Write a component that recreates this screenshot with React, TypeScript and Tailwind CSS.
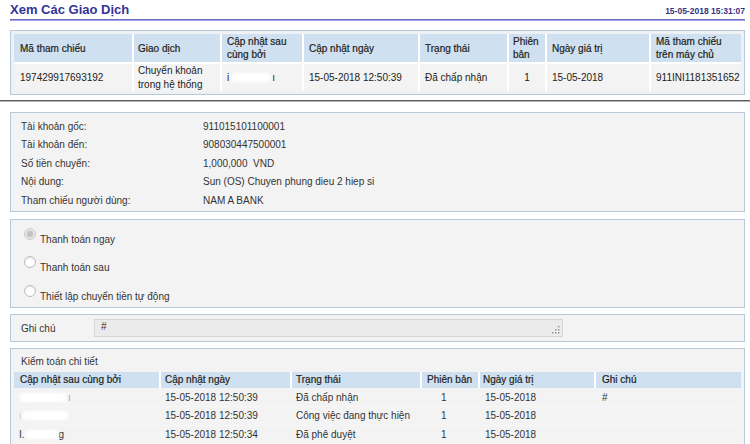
import React from 'react';

const topHead = [
  { label: 'Mã tham chiếu', cls: 'pl-[6px]' },
  { label: 'Giao dịch', cls: 'pl-[4px]' },
  { label: 'Cập nhật sau cùng bởi', cls: 'pl-[5px]' },
  { label: 'Cập nhật ngày', cls: 'pl-[5px]' },
  { label: 'Trạng thái', cls: 'pl-[5px]' },
  { label: 'Phiên bản', cls: 'pl-[4px]' },
  { label: 'Ngày giá trị', cls: 'pl-[5px]' },
  { label: 'Mã tham chiếu trên máy chủ', cls: 'pl-[5px]' },
];

const details = [
  ['Tài khoản gốc:', '911015101100001'],
  ['Tài khoản đến:', '908030447500001'],
  ['Số tiền chuyển:', '1,000,000  VND'],
  ['Nội dung:', 'Sun (OS) Chuyen phung dieu 2 hiep si'],
  ['Tham chiếu người dùng:', 'NAM A BANK'],
];

const auditHead = ['Cập nhật sau cùng bởi', 'Cập nhật ngày', 'Trạng thái', 'Phiên bản', 'Ngày giá trị', 'Ghi chú'];
const auditPad = ['pl-[6px]', 'pl-[4px]', 'pl-[4px]', 'pl-[5px]', 'pl-[3px]', 'pl-[6px]'];

const auditRows = [
  { date: '15-05-2018 12:50:39', status: 'Đã chấp nhận', note: '#' },
  { date: '15-05-2018 12:50:39', status: 'Công việc đang thực hiện', note: '' },
  { date: '15-05-2018 12:50:34', status: 'Đã phê duyệt', note: '' },
];

function Blob({ className }: { className: string }) {
  return <span className={`inline-block h-[9px] rounded-full bg-white blur-[1.5px] ${className}`} />;
}

function RedactedName({ row }: { row: number }) {
  if (row === 0) {
    return (
      <span className="flex items-center">
        <Blob className="w-[48px]" />
        <span className="text-[#9ab] ml-[1px]">ı</span>
      </span>
    );
  }
  if (row === 1) {
    return (
      <span className="flex items-center">
        <span className="text-[#f0c890]">ı</span>
        <Blob className="w-[46px]" />
      </span>
    );
  }
  return (
    <span className="flex items-center">
      <span>I.</span>
      <Blob className="w-[34px]" />
      <span>g</span>
    </span>
  );
}

function Radio({ checked }: { checked?: boolean }) {
  if (checked) {
    return (
      <span className="w-[12px] h-[12px] rounded-full border border-[#cfcfcf] bg-[#e4e4e4] flex items-center justify-center shrink-0">
        <span className="w-[6px] h-[6px] rounded-full bg-[#c2c2c2]" />
      </span>
    );
  }
  return (
    <span className="w-[12px] h-[12px] rounded-full border border-[#bdbdbd] bg-white shadow-[inset_0_1px_1px_rgba(0,0,0,0.12)] shrink-0" />
  );
}

export default function App() {
  return (
    <div className="w-[750px] h-[444px] overflow-hidden bg-white font-['Liberation_Sans',Arial,sans-serif] text-[10px] text-[#333]">
      {/* Title */}
      <div className="ml-[10px] w-[735px]">
        <div className="flex items-end justify-between h-[19px]">
          <h1 className="text-[13px] leading-[16px] font-bold text-[#33339a] pb-[1px]">Xem Các Giao Dịch</h1>
          <span className="text-[8.5px] leading-[10px] font-bold text-[#35357f] pb-[3px]">15-05-2018 15:31:07</span>
        </div>
        <div className="h-[1px] bg-[#6a6acb]" />
        <div className="h-[1px] bg-[#a4a4e2]" />
      </div>

      {/* Transaction summary */}
      <div className="ml-[10px] w-[735px] mt-[9px] border border-[#b7c8d8] bg-[#eef2f5] p-[3px]">
        <div className="grid grid-cols-[118px_86px_80px_114px_87px_36px_102px_1fr] gap-[2px] bg-white text-[#222]">
          {topHead.map((h) => (
            <div key={h.label} className={`bg-[#cfe0f0] h-[28px] flex items-center leading-[13px] pr-[4px] [-webkit-text-stroke:0.2px] ${h.cls}`}>
              {h.label}
            </div>
          ))}
          <div className="bg-[#f3f3f3] h-[27px] flex items-center pl-[6px]">197429917693192</div>
          <div className="bg-[#f3f3f3] h-[27px] flex items-center pl-[4px] leading-[13.5px]">Chuyển khoản<br />trong hệ thống</div>
          <div className="bg-[#f3f3f3] h-[27px] flex items-center pl-[5px]">
            <span>i</span>
            <Blob className="w-[40px] ml-[2px]" />
            <span className="ml-[1px]">ı</span>
          </div>
          <div className="bg-[#f3f3f3] h-[27px] flex items-center pl-[5px]">15-05-2018 12:50:39</div>
          <div className="bg-[#f3f3f3] h-[27px] flex items-center pl-[5px]">Đã chấp nhận</div>
          <div className="bg-[#f3f3f3] h-[27px] flex items-center justify-center">1</div>
          <div className="bg-[#f3f3f3] h-[27px] flex items-center pl-[5px]">15-05-2018</div>
          <div className="bg-[#f3f3f3] h-[27px] flex items-center pl-[5px]">911INI1181351652</div>
        </div>
      </div>

      {/* Divider */}
      <div className="mt-[5px] h-[1px] bg-[#5e5e5e]" />
      <div className="h-[1px] bg-[#b0b0b0]" />

      {/* Details */}
      <div className="ml-[10px] w-[735px] mt-[10px] border border-[#b7c8d8] bg-[#f3f3f3] pt-[4px] pb-[1px] pl-[10px]">
        {details.map(([k, v]) => (
          <div key={k} className="flex items-center h-[18.5px]">
            <span className="w-[182px]">{k}</span>
            <span className="whitespace-pre">{v}</span>
          </div>
        ))}
      </div>

      {/* Payment options */}
      <div className="ml-[10px] w-[735px] mt-[7px] border border-[#b7c8d8] bg-[#f3f3f3] pt-[8px] pb-[2px] pl-[13px]">
        <div className="flex h-[28.5px]">
          <Radio checked />
          <span className="ml-[4px] mt-[6px] leading-[12px]">Thanh toán ngay</span>
        </div>
        <div className="flex h-[28.5px]">
          <Radio />
          <span className="ml-[4px] mt-[6px] leading-[12px]">Thanh toán sau</span>
        </div>
        <div className="flex h-[20px]">
          <Radio />
          <span className="ml-[4px] mt-[6px] leading-[12px]">Thiết lập chuyển tiền tự động</span>
        </div>
      </div>

      {/* Note */}
      <div className="ml-[10px] w-[735px] mt-[6px] h-[28px] border border-[#b7c8d8] bg-[#f3f3f3] pl-[10px] flex items-center">
        <span className="w-[73px] pt-[2px]">Ghi chú</span>
        <div className="relative w-[469px] h-[18px] border border-[#d6d6d6] bg-[#ebebeb] pl-[6px] pt-[1px] leading-[12px]">
          #
          <svg className="absolute right-[2px] bottom-[2px]" width="8" height="8" viewBox="0 0 8 8">
            <rect x="6" y="0" width="1.5" height="1.5" fill="#999" />
            <rect x="6" y="3" width="1.5" height="1.5" fill="#999" />
            <rect x="3" y="3" width="1.5" height="1.5" fill="#999" />
            <rect x="6" y="6" width="1.5" height="1.5" fill="#999" />
            <rect x="3" y="6" width="1.5" height="1.5" fill="#999" />
            <rect x="0" y="6" width="1.5" height="1.5" fill="#999" />
          </svg>
        </div>
      </div>

      {/* Audit */}
      <div className="ml-[10px] w-[735px] mt-[6px] border border-[#b7c8d8] bg-[#f3f3f3] pt-[6px] px-[3px] pb-[4px]">
        <div className="pl-[7px] leading-[14px] mb-[3px]">Kiểm toán chi tiết</div>
        <div className="grid grid-cols-[145px_129px_128px_56px_114px_1fr] gap-x-[2px] bg-white text-[#222]">
          {auditHead.map((h, i) => (
            <div key={h} className={`bg-[#cfe0f0] h-[16px] flex items-center [-webkit-text-stroke:0.2px] ${auditPad[i]}`}>
              {h}
            </div>
          ))}
        </div>
        <div className="mt-[1px]">
          {auditRows.map((r, i) => (
            <div key={i} className="grid grid-cols-[145px_129px_128px_56px_114px_1fr] gap-x-[2px] h-[18.5px] border-b border-[#f7f7f7]">
              <div className="flex items-center pl-[5px]"><RedactedName row={i} /></div>
              <div className="flex items-center pl-[4px]">{r.date}</div>
              <div className="flex items-center pl-[4px] whitespace-nowrap">{r.status}</div>
              <div className="flex items-center pl-[19px]">1</div>
              <div className="flex items-center pl-[5px]">15-05-2018</div>
              <div className="flex items-center pl-[6px]">{r.note}</div>
            </div>
          ))}
        </div>
      </div>
    </div>
  );
}
